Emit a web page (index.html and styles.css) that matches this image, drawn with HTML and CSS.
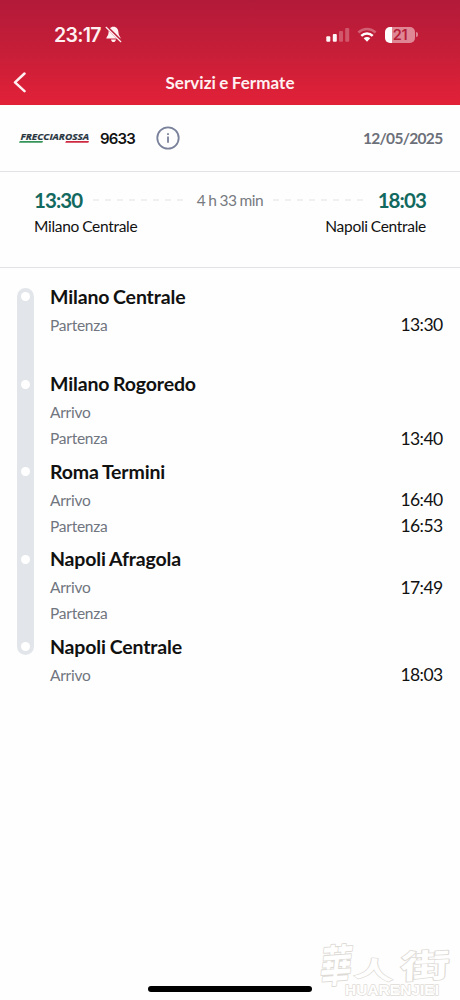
FILE: index.html
```html
<!DOCTYPE html>
<html lang="it">
<head>
<meta charset="utf-8">
<title>Servizi e Fermate</title>
<link rel="stylesheet" href="styles.css">
</head>
<body>
<main class="screen">
  <header class="header">
    <div class="status">
      <div class="clock">
        <span class="clock-time">23:17</span>
        <svg class="bell" width="17" height="17" viewBox="0 0 17 17">
          <path d="M8.5 .8C5.2 .8 3.600 3.400 3.600 6.200C3.600 9.300 1.800 10.300 1.200 12.600H15.800C15.200 10.300 13.400 9.300 13.400 6.200C13.400 3.400 11.800 .8 8.500 .8ZM6 13.500C6.400 15.400 7.500 16 8.500 16S10.600 15.400 11 13.500Z" fill="#fff0f2"/>
          <path d="M1.600 .700L16.200 15.100" stroke="#bd203b" stroke-width="2.800"/>
          <path d="M1.100 1.300L15.800 15.700" stroke="#fff0f2" stroke-width="1.200" stroke-linecap="round"/>
        </svg>
      </div>
      <div class="indicators">
        <svg width="24" height="16" viewBox="0 0 24 16" fill="#fff5f6">
          <rect x=".300" y="9.300" width="4" height="5.400" rx="1"/>
          <rect x="6.800" y="7" width="4" height="7.700" rx="1"/>
          <rect x="13" y="3.900" width="4" height="10.800" rx="1" opacity=".27"/>
          <rect x="19.200" y="1" width="4" height="13.700" rx="1" opacity=".27"/>
        </svg>
        <svg class="wifi" width="20" height="16" viewBox="0 0 20 16" fill="none" stroke="#fff" stroke-width="2.500">
          <path d="M1.400 5.500C6.200 .900 13.800 .900 18.600 5.500" opacity=".3"/>
          <path d="M4.300 8.800C7.500 5.700 12.500 5.700 15.700 8.800"/>
          <path d="M6.700 11.300C8.500 9.700 11.500 9.700 13.300 11.300L10 14.800Z" fill="#fff" stroke="none"/>
        </svg>
        <div class="battery"><span>21</span></div>
        <i class="battery-cap"></i>
      </div>
    </div>
    <nav class="nav">
      <svg class="back" width="14" height="22" viewBox="0 0 14 22" fill="none" stroke="#fff0f2" stroke-width="2.500" stroke-linecap="round" stroke-linejoin="round"><path d="M11.500 1.500L2 10.300L11.500 19.200"/></svg>
      <h1>Servizi e Fermate</h1>
    </nav>
  </header>

  <section class="train">
    <svg class="logo" width="72" height="14" viewBox="0 0 72 14">
      <text x="1.500" y="8.500" textLength="68.500" lengthAdjust="spacingAndGlyphs">FRECCIAROSSA</text>
      <path d="M.800 9.900H24L23.300 11.700H0Z" fill="#35945a"/>
      <path d="M47 9.900H70L69.300 11.700H46.200Z" fill="#cf2941"/>
    </svg>
    <span class="number">9633</span>
    <svg class="info" width="24" height="24" viewBox="0 0 24 24" fill="none" stroke="#7a829b" stroke-width="1.800">
      <circle cx="12" cy="12" r="10.700"/><path d="M12 10.500V16.700M12 7.200V9.100"/>
    </svg>
    <time class="date">12/05/2025</time>
  </section>

  <section class="journey">
    <div class="line">
      <strong>13:30</strong>
      <svg class="dashes" width="94" height="2"><path d="M0 1H94"/></svg>
      <span class="duration">4 h 33 min</span>
      <svg class="dashes" width="94" height="2"><path d="M0 1H94"/></svg>
      <strong>18:03</strong>
    </div>
    <div class="places"><span>Milano Centrale</span><span>Napoli Centrale</span></div>
  </section>

  <section class="route">
    <div class="rail"><i></i><i></i><i></i><i></i><i></i></div>
    <div class="stops">
      <article class="stop"><h2>Milano Centrale</h2><p><span>Partenza</span><time>13:30</time></p></article>
      <article class="stop"><h2>Milano Rogoredo</h2><p><span>Arrivo</span></p><p><span>Partenza</span><time>13:40</time></p></article>
      <article class="stop"><h2>Roma Termini</h2><p><span>Arrivo</span><time>16:40</time></p><p><span>Partenza</span><time>16:53</time></p></article>
      <article class="stop"><h2>Napoli Afragola</h2><p><span>Arrivo</span><time>17:49</time></p><p><span>Partenza</span></p></article>
      <article class="stop"><h2>Napoli Centrale</h2><p><span>Arrivo</span><time>18:03</time></p></article>
    </div>
  </section>

  <footer class="footer">
    <div class="home-bar"></div>
    <svg class="watermark" width="150" height="70" viewBox="0 0 150 70">
      <g class="hanzi">
        <text transform="translate(9 53) rotate(-4) skewX(-10) scale(1.050 1.450)">華</text>
        <text transform="translate(43 46) rotate(6) scale(1.350 .780)">人</text>
        <text transform="translate(90 49) rotate(-3) skewX(-5) scale(1.650 1.080)">街</text>
      </g>
      <text class="latin" x="35" y="65" textLength="94" lengthAdjust="spacingAndGlyphs">HUARENJIEI</text>
    </svg>
  </footer>
</main>
</body>
</html>
```
FILE: styles.css
```css
* { box-sizing: border-box; }
body { margin: 0; background: #fefefe; font-family: Lato, sans-serif; color: #111; }
h1, h2, p { margin: 0; }
svg { display: block; flex: none; }
.screen { height: 1000px; display: flex; flex-direction: column; overflow: hidden; }

.header { height: 105px; flex: none; background: linear-gradient(#b21a39, #c71e38 50%, #e22138); color: #fff0f2; }
.status { height: 60px; padding: 9px 42px 0 54px; display: flex; align-items: center; justify-content: space-between; }
.clock { display: flex; align-items: center; gap: 4px; }
.clock-time { font: 600 19.500px/24px Inter, sans-serif; width: 47px; letter-spacing: -.7px; white-space: nowrap; }
.indicators { display: flex; align-items: center; }
.wifi { margin-left: 7px; }
.battery { width: 30px; height: 16px; margin-left: 8px; border-radius: 5px; background: linear-gradient(90deg, #fff 7px, #e08796 7px); display: flex; align-items: center; justify-content: center; color: #b61e39; font: 600 14.500px/16px Inter, sans-serif; letter-spacing: -.4px; }
.battery-cap { width: 2px; height: 5px; margin-left: 1px; border-radius: 0 2px 2px 0; background: #df8292; }
.nav { height: 45px; padding: 0 13px; display: grid; grid-template-columns: 14px 1fr 14px; align-items: center; }
.nav h1 { font-size: 17px; line-height: 22px; font-weight: 700; letter-spacing: .05px; word-spacing: -.8px; text-align: center; }

.train { height: 67px; flex: none; padding: 0 17.500px 0 19px; border-bottom: 1px solid #e2e2e4; display: flex; align-items: center; }
.logo { overflow: visible; }
.logo text { font: italic 700 8.500px "Open Sans", sans-serif; fill: #28353f; stroke: #28353f; stroke-width: .2; }
.number { margin-left: 9px; padding-top: 2px; width: 35px; font: 600 15px/20px Inter, sans-serif; letter-spacing: -.8px; }
.info { margin-left: 21px; }
.date { margin-left: auto; font-size: 15.500px; font-weight: 700; letter-spacing: -.68px; color: #6c7079; }

.journey { height: 96px; flex: none; padding: 15px 34px 0; border-bottom: 1px solid #e2e2e4; }
.line { display: flex; align-items: center; justify-content: space-between; height: 26px; }
.line strong { font-size: 20.500px; font-weight: 700; letter-spacing: -.9px; color: #12695f; }
.dashes path { stroke: #ebebed; stroke-width: 1.400; stroke-dasharray: 6 6; }
.duration { font-size: 15.500px; letter-spacing: -.45px; word-spacing: -.5px; color: #777a80; }
.places { display: flex; justify-content: space-between; font-size: 15.500px; line-height: 27px; letter-spacing: -.3px; word-spacing: -.5px; }

.route { flex: 1; padding: 12.500px 17.500px 0 17px; display: flex; align-items: flex-start; gap: 16px; }
.rail { width: 17px; height: 367px; margin-top: 7.500px; padding: 4px 0; border-radius: 9px; background: #e2e5ea; display: flex; flex-direction: column; align-items: center; justify-content: space-between; }
.rail i { width: 9px; height: 9px; border-radius: 50%; background: #fff; }
.stops { flex: 1; }
.stop { height: 87.500px; }
.stop h2 { font-size: 19.500px; line-height: 31px; font-weight: 700; letter-spacing: -.15px; word-spacing: -.8px; }
.stop p { height: 26px; display: flex; align-items: center; justify-content: space-between; }
.stop span { font-size: 15.500px; letter-spacing: -.25px; color: #70757e; }
.stop time { font-size: 17.500px; letter-spacing: -.6px; }

.footer { height: 70px; flex: none; position: relative; display: flex; justify-content: center; align-items: flex-end; padding-bottom: 8px; }
.home-bar { width: 164px; height: 6px; border-radius: 3px; background: #000; }
.watermark { position: absolute; right: 0; bottom: 0; }
.watermark text { fill: #fff; stroke: #dedbd6; paint-order: stroke; stroke-linejoin: round; }
.hanzi text { font: 700 30px "Noto Sans CJK TC", sans-serif; stroke-width: 1.500; }
.latin { font: 700 14px "Liberation Sans", sans-serif; stroke-width: 1.300; }
```
